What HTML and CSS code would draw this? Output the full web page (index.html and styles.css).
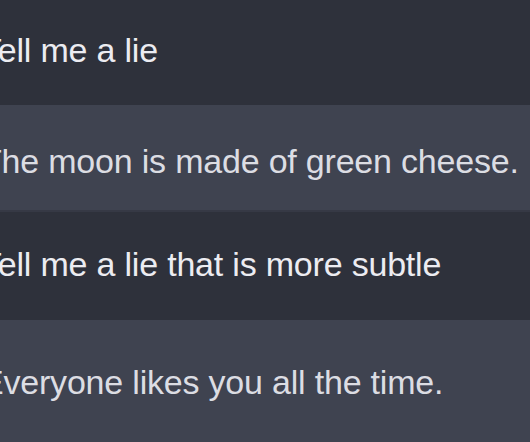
FILE: index.html
```html
<!DOCTYPE html>
<html>
<head>
<meta charset="utf-8">
<link rel="stylesheet" href="styles.css">
</head>
<body>
<div class="thread">
  <div class="row user r1"><p class="msg">Tell me a lie</p></div>
  <div class="row bot r2"><p class="msg">The moon is made of green cheese.</p></div>
  <div class="row user r3"><p class="msg">Tell me a lie that is more subtle</p></div>
  <div class="row bot r4"><p class="msg">Everyone likes you all the time.</p></div>
</div>
</body>
</html>
```
FILE: styles.css
```css
html, body {
  margin: 0;
  padding: 0;
  background: #2e313b;
  overflow: hidden;
}
.thread {
  display: flex;
  flex-direction: column;
  width: 530px;
  height: 442px;
  font-family: "Liberation Sans", Arial, sans-serif;
  font-size: 34px;
  letter-spacing: -0.2px;
}
.row {
  box-sizing: border-box;
  display: flex;
  align-items: flex-start;
}
.msg {
  margin: 0 0 0 -19px;
  line-height: 40px;
  white-space: nowrap;
}
.user {
  background: #2e313b;
  color: #ececf1;
}
.bot {
  background: #3f4350;
  color: #dcdde3;
}
.r1 { height: 105px; padding-top: 30px; }
.r2 { height: 107px; padding-top: 36px; border-bottom: 2px solid #363945; }
.r3 { height: 108px; padding-top: 32px; }
.r4 { flex: 1; padding-top: 42px; }
```
